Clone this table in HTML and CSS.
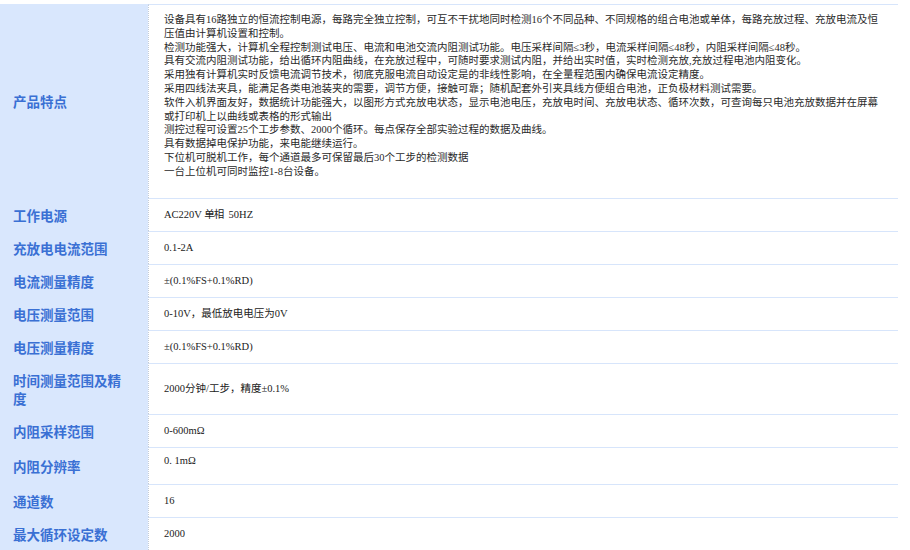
FILE: index.html
```html
<!DOCTYPE html>
<html lang="zh-CN">
<head>
<meta charset="utf-8">
<title>产品参数</title>
<link rel="stylesheet" href="styles.css">
</head>
<body>
<table class="specs">
  <colgroup><col class="col-label"><col class="col-value"></colgroup>
  <tbody>
    <tr>
      <th class="label">产品特点</th>
      <td class="value features">设备具有16路独立的恒流控制电源，每路完全独立控制，可互不干扰地同时检测16个不同品种、不同规格的组合电池或单体，每路充放过程、充放电流及恒压值由计算机设置和控制。<br>检测功能强大，计算机全程控制测试电压、电流和电池交流内阻测试功能。电压采样间隔≤3秒，电流采样间隔≤48秒，内阻采样间隔≤48秒。<br>具有交流内阻测试功能，给出循环内阻曲线，在充放过程中，可随时要求测试内阻，并给出实时值，实时检测充放,充放过程电池内阻变化。<br>采用独有计算机实时反馈电流调节技术，彻底克服电流自动设定是的非线性影响，在全量程范围内确保电流设定精度。<br>采用四线法夹具，能满足各类电池装夹的需要，调节方便，接触可靠；随机配套外引夹具线方便组合电池，正负极材料测试需要。<br>软件入机界面友好，数据统计功能强大，以图形方式充放电状态，显示电池电压，充放电时间、充放电状态、循环次数，可查询每只电池充放数据并在屏幕或打印机上以曲线或表格的形式输出<br>测控过程可设置25个工步参数、2000个循环。每点保存全部实验过程的数据及曲线。<br>具有数据掉电保护功能，来电能继续运行。<br>下位机可脱机工作，每个通道最多可保留最后30个工步的检测数据<br>一台上位机可同时监控1-8台设备。</td>
    </tr>
    <tr><th class="label">工作电源</th><td class="value">AC220V <span class="narrow">单相</span>&nbsp; 50HZ</td></tr>
    <tr><th class="label">充放电电流范围</th><td class="value">0.1-2A</td></tr>
    <tr><th class="label">电流测量精度</th><td class="value">±(0.1%FS+0.1%RD)</td></tr>
    <tr><th class="label">电压测量范围</th><td class="value">0-10V，最低放电电压为0V</td></tr>
    <tr><th class="label">电压测量精度</th><td class="value">±(0.1%FS+0.1%RD)</td></tr>
    <tr class="tall"><th class="label">时间测量范围及精度</th><td class="value">2000分钟/工步，精度±0.1%</td></tr>
    <tr><th class="label">内阻采样范围</th><td class="value">0-600mΩ</td></tr>
    <tr class="top-row"><th class="label">内阻分辨率</th><td class="value">0. 1mΩ</td></tr>
    <tr><th class="label">通道数</th><td class="value">16</td></tr>
    <tr><th class="label">最大循环设定数</th><td class="value">2000</td></tr>
  </tbody>
</table>
</body>
</html>
```

FILE: styles.css
```css
html {
  overflow: hidden;
}

body {
  margin: 0;
  padding-top: 4px;
  background: #ffffff;
}

.specs {
  width: 898px;
  table-layout: fixed;
  border-collapse: separate;
  border-spacing: 0;
}

.col-label {
  width: 148px;
}

.specs th,
.specs td {
  border-top: 1px solid #d7e5fb;
  height: 32px;
  padding-top: 0;
  padding-bottom: 0;
  vertical-align: middle;
}

.label {
  background: #d9e7fd;
  border-top-color: #d9e7fd !important;
  color: #3a70d4;
  font-family: "Noto Sans CJK SC", sans-serif;
  font-weight: 700;
  font-size: 13.5px;
  line-height: 18px;
  text-align: left;
  padding-left: 13px;
  padding-right: 22px;
}

.value {
  border-left: 1px dotted #c3cbd8;
  color: #222222;
  font-family: "Liberation Serif", "Noto Sans CJK SC", serif;
  font-size: 10.5px;
  line-height: 13.8px;
  padding-left: 15px;
  padding-right: 16px;
}

.features {
  font-family: "Liberation Serif", "Noto Sans CJK SC", sans-serif;
  color: #2a2a2a;
  padding-top: 8px !important;
  padding-bottom: 19px !important;
}

.narrow {
  letter-spacing: -1px;
}

.tall th,
.tall td {
  height: 50px;
}

.top-row td {
  vertical-align: top;
  padding-top: 6px;
  height: 30px;
}

.top-row th {
  height: 36px;
}
```
